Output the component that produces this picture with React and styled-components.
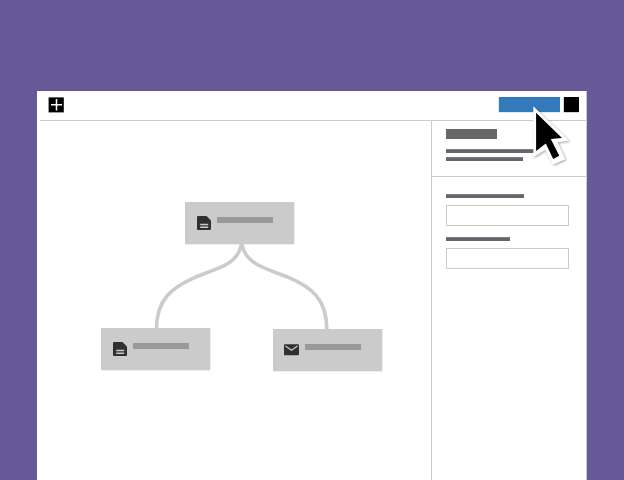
import React from "react";
import styled, { createGlobalStyle } from "styled-components";

const GlobalStyle = createGlobalStyle`
  * { box-sizing: border-box; }
  html, body { margin: 0; background: #675997; overflow: hidden; }
`;

const Page = styled.main`
  position: relative;
  height: 480px;
  padding: 91px 37px 0;
  background: #675997;
  overflow: hidden;
`;

const Window = styled.section`
  display: flex;
  flex-direction: column;
  width: 550px;
  height: 389px;
  background: #fff;
  border-right: 1px solid #cbcbcb;
`;

const Toolbar = styled.header`
  display: flex;
  align-items: flex-start;
  gap: 4px;
  flex: none;
  height: 30px;
  margin-left: 3px;
  padding: 6px 7px 0 8px;
  border-bottom: 1px solid #cbcbcb;
`;

const AddIcon = styled.svg`
  display: block;
  width: 16px;
  height: 16px;
  margin-right: auto;
`;

const ToolbarButton = styled.div`
  width: ${(p) => p.$width}px;
  height: 15px;
  background: ${(p) => p.$color};
  box-shadow: -0.5px 0.5px 0 ${(p) => p.$color}55;
`;

const Body = styled.div`
  display: flex;
  flex: 1;
`;

const Canvas = styled.div`
  position: relative;
  width: 394px;
  flex: none;
`;

const Connectors = styled.svg`
  position: absolute;
  left: -37px;
  top: -121px;
  width: 624px;
  height: 480px;
  pointer-events: none;
`;

const Node = styled.div`
  position: absolute;
  left: ${(p) => p.$x}px;
  top: ${(p) => p.$y}px;
  display: flex;
  align-items: flex-start;
  gap: ${(p) => p.$gap}px;
  width: 109px;
  height: 42px;
  padding: 14px 0 0 ${(p) => p.$inset}px;
  background: #cbcbcb;
  box-shadow: 0.5px 0.5px 0 rgba(203, 203, 203, 0.6);
`;

const NodeIcon = styled.svg`
  display: block;
  width: 15px;
  height: 15px;
`;

const NodeLabel = styled.div`
  width: 56px;
  height: 6px;
  margin-top: 1px;
  background: #999;
`;

const Sidebar = styled.aside`
  flex: 1;
  border-left: 1px solid #cbcbcb;
`;

const Summary = styled.div`
  height: 56px;
  padding: 8px 0 0 14px;
  border-bottom: 1px solid #cbcbcb;
`;

const Form = styled.div`
  padding: 17px 0 0 14px;
`;

const TextBar = styled.div`
  width: ${(p) => p.$width}px;
  height: ${(p) => p.$height || 4}px;
  margin-bottom: ${(p) => p.$gap}px;
  background: #666;
  border-top: ${(p) => (p.$height ? "0" : "1px solid #7b7891")};
`;

const Input = styled.div`
  width: 123px;
  height: 21px;
  margin-bottom: 11px;
  border: 1px solid #cbcbcb;
`;

const Pointer = styled.svg`
  position: absolute;
  left: 528px;
  top: 100px;
  width: 48px;
  height: 72px;
  filter: drop-shadow(1px 1px 1.2px rgba(0, 0, 0, 0.35));
`;

const DocumentIcon = () => (
  <NodeIcon viewBox="0 0 15 15">
    <path fill="#303030" d="M1 0h8.5L14 4.5V13q0 1-1 1H1q-1 0-1-1V1q0-1 1-1z" />
    <path stroke="#cbcbcb" strokeWidth="1.5" d="M3.2 8.6h8M3.2 11.3h8" />
  </NodeIcon>
);

const MailIcon = () => (
  <NodeIcon viewBox="0 0 15 15">
    <rect y="1.2" width="15" height="11" rx="1" fill="#303030" />
    <path fill="none" stroke="#cbcbcb" strokeWidth="1.3" d="M1.5 3 7.5 7.2 13.5 3" />
  </NodeIcon>
);

export default function App() {
  return (
    <>
      <GlobalStyle />
      <Page>
        <Window>
          <Toolbar>
            <AddIcon viewBox="0 0 16 16">
              <rect x=".6" y=".4" width="15.2" height="15" fill="#000" />
              <path d="M8.5 2v11.5M3 7.7h11" stroke="#fff" strokeWidth="1.5" />
            </AddIcon>
            <ToolbarButton $width={61} $color="#337abb" />
            <ToolbarButton $width={15} $color="#000000" />
          </Toolbar>
          <Body>
            <Canvas>
              <Connectors viewBox="0 0 624 480">
                <g fill="none" stroke="#cbcbcb" strokeWidth="3.6">
                  <path d="M241.7 243C240.7 250 236.5 258.5 227 264C217 269.8 206 272.5 195 277.3C172 287.5 156.5 299 156.5 329" />
                  <path d="M241.7 243C242.7 250 246.9 258.5 256.4 264C266.4 269.8 277.4 273 288.4 277.3C311.4 287 326.8 299 326.8 329" />
                </g>
              </Connectors>
              <Node $x={148} $y={81} $inset={12} $gap={5.4}>
                <DocumentIcon />
                <NodeLabel />
              </Node>
              <Node $x={64} $y={207} $inset={12} $gap={5}>
                <DocumentIcon />
                <NodeLabel />
              </Node>
              <Node $x={236} $y={207.6} $inset={11} $gap={6}>
                <MailIcon />
                <NodeLabel />
              </Node>
            </Canvas>
            <Sidebar>
              <Summary>
                <TextBar $width={51.4} $height={10.4} $gap={9.6} />
                <TextBar $width={90} $gap={4} />
                <TextBar $width={77.4} $gap={0} />
              </Summary>
              <Form>
                <TextBar $width={78} $gap={7} />
                <Input />
                <TextBar $width={64.4} $gap={7} />
                <Input />
              </Form>
            </Sidebar>
          </Body>
        </Window>
        <Pointer viewBox="528 100 48 72">
          <path fill="#fff" d="M533.3 106.3 569 140.8 557.6 142.2 565.3 159.3 553 164.8 545.3 150 533.3 157z" />
          <path d="M536.1 112.7 562 137.9 550.8 138.9 559.3 155.7 553.2 158.9 545.8 143.6 536.1 151z" />
        </Pointer>
      </Page>
    </>
  );
}
